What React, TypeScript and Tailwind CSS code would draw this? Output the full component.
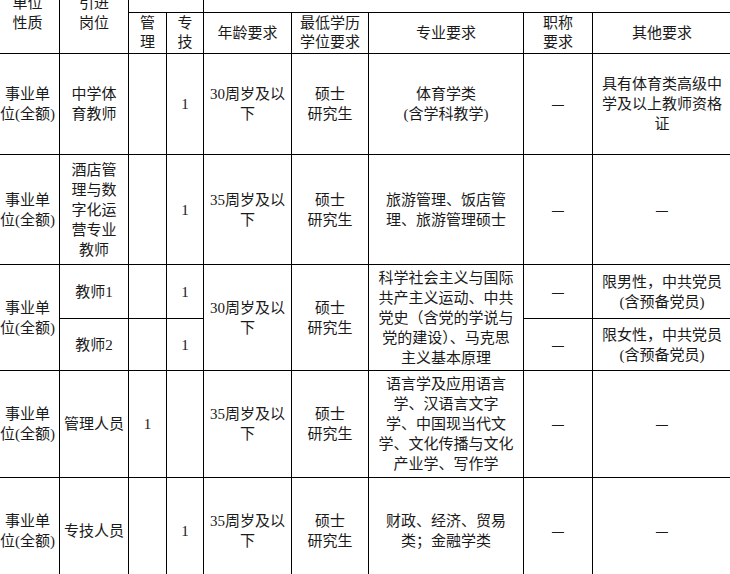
import React from 'react';

const cell = 'bg-white flex items-center justify-center text-center';

const Dash: React.FC = () => (
  <span className="font-['Noto_Sans_CJK_SC',sans-serif]">—</span>
);

const App: React.FC = () => {
  return (
    <div className="w-[730px] h-[574px] overflow-hidden bg-white">
      <div className="-mt-[29px] -ml-[5px] w-[737px] font-['Liberation_Serif','Noto_Sans_CJK_SC',serif] text-[15px] leading-[20px] text-[#1a1a1a]">
        <div className="grid grid-cols-[63px_68px_37px_36px_87px_76px_154px_68px_138px] grid-rows-[40px_40px_100px_109px_53px_51px_106px_106px] gap-px bg-black p-px">
          {/* header */}
          <div className={`${cell} col-start-1 row-start-1 row-span-2`}>单位<br />性质</div>
          <div className={`${cell} col-start-2 row-start-1 row-span-2`}>引进<br />岗位</div>
          <div className={`${cell} col-start-3 row-start-1 col-span-2`}></div>
          <div className={`${cell} col-start-5 row-start-1 col-span-5`}></div>
          <div className={`${cell} col-start-3 row-start-2 leading-[19px]`}>管<br />理</div>
          <div className={`${cell} col-start-4 row-start-2 leading-[19px]`}>专<br />技</div>
          <div className={`${cell} col-start-5 row-start-2`}>年龄要求</div>
          <div className={`${cell} col-start-6 row-start-2 leading-[19px]`}>最低学历<br />学位要求</div>
          <div className={`${cell} col-start-7 row-start-2`}>专业要求</div>
          <div className={`${cell} col-start-8 row-start-2 leading-[19px]`}>职称<br />要求</div>
          <div className={`${cell} col-start-9 row-start-2`}>其他要求</div>

          {/* 中学体育教师 */}
          <div className={`${cell} col-start-1 row-start-3`}>事业单<br />位(全额)</div>
          <div className={`${cell} col-start-2 row-start-3`}>中学体<br />育教师</div>
          <div className={`${cell} col-start-3 row-start-3`}></div>
          <div className={`${cell} col-start-4 row-start-3`}>1</div>
          <div className={`${cell} col-start-5 row-start-3`}>30周岁及以<br />下</div>
          <div className={`${cell} col-start-6 row-start-3`}>硕士<br />研究生</div>
          <div className={`${cell} col-start-7 row-start-3`}>体育学类<br />(含学科教学)</div>
          <div className={`${cell} col-start-8 row-start-3`}><Dash /></div>
          <div className={`${cell} col-start-9 row-start-3`}>具有体育类高级中<br />学及以上教师资格<br />证</div>

          {/* 酒店管理 */}
          <div className={`${cell} col-start-1 row-start-4`}>事业单<br />位(全额)</div>
          <div className={`${cell} col-start-2 row-start-4`}>酒店管<br />理与数<br />字化运<br />营专业<br />教师</div>
          <div className={`${cell} col-start-3 row-start-4`}></div>
          <div className={`${cell} col-start-4 row-start-4`}>1</div>
          <div className={`${cell} col-start-5 row-start-4`}>35周岁及以<br />下</div>
          <div className={`${cell} col-start-6 row-start-4`}>硕士<br />研究生</div>
          <div className={`${cell} col-start-7 row-start-4`}>旅游管理、饭店管<br />理、旅游管理硕士</div>
          <div className={`${cell} col-start-8 row-start-4`}><Dash /></div>
          <div className={`${cell} col-start-9 row-start-4`}><Dash /></div>

          {/* 教师1 / 教师2 */}
          <div className={`${cell} col-start-1 row-start-5 row-span-2`}>事业单<br />位(全额)</div>
          <div className={`${cell} col-start-2 row-start-5`}>教师1</div>
          <div className={`${cell} col-start-3 row-start-5`}></div>
          <div className={`${cell} col-start-4 row-start-5`}>1</div>
          <div className={`${cell} col-start-5 row-start-5 row-span-2`}>30周岁及以<br />下</div>
          <div className={`${cell} col-start-6 row-start-5 row-span-2`}>硕士<br />研究生</div>
          <div className={`${cell} col-start-7 row-start-5 row-span-2`}>
            科学社会主义与国际<br />共产主义运动、中共<br />党史（含党的学说与<br />党的建设）、马克思<br />主义基本原理
          </div>
          <div className={`${cell} col-start-8 row-start-5`}><Dash /></div>
          <div className={`${cell} col-start-9 row-start-5`}>限男性，中共党员<br />(含预备党员)</div>
          <div className={`${cell} col-start-2 row-start-6`}>教师2</div>
          <div className={`${cell} col-start-3 row-start-6`}></div>
          <div className={`${cell} col-start-4 row-start-6`}>1</div>
          <div className={`${cell} col-start-8 row-start-6`}><Dash /></div>
          <div className={`${cell} col-start-9 row-start-6`}>限女性，中共党员<br />(含预备党员)</div>

          {/* 管理人员 */}
          <div className={`${cell} col-start-1 row-start-7`}>事业单<br />位(全额)</div>
          <div className={`${cell} col-start-2 row-start-7`}>管理人员</div>
          <div className={`${cell} col-start-3 row-start-7`}>1</div>
          <div className={`${cell} col-start-4 row-start-7`}></div>
          <div className={`${cell} col-start-5 row-start-7`}>35周岁及以<br />下</div>
          <div className={`${cell} col-start-6 row-start-7`}>硕士<br />研究生</div>
          <div className={`${cell} col-start-7 row-start-7`}>
            语言学及应用语言<br />学、汉语言文字<br />学、中国现当代文<br />学、文化传播与文化<br />产业学、写作学
          </div>
          <div className={`${cell} col-start-8 row-start-7`}><Dash /></div>
          <div className={`${cell} col-start-9 row-start-7`}><Dash /></div>

          {/* 专技人员 */}
          <div className={`${cell} col-start-1 row-start-8`}>事业单<br />位(全额)</div>
          <div className={`${cell} col-start-2 row-start-8`}>专技人员</div>
          <div className={`${cell} col-start-3 row-start-8`}></div>
          <div className={`${cell} col-start-4 row-start-8`}>1</div>
          <div className={`${cell} col-start-5 row-start-8`}>35周岁及以<br />下</div>
          <div className={`${cell} col-start-6 row-start-8`}>硕士<br />研究生</div>
          <div className={`${cell} col-start-7 row-start-8`}>财政、经济、贸易<br />类；金融学类</div>
          <div className={`${cell} col-start-8 row-start-8`}><Dash /></div>
          <div className={`${cell} col-start-9 row-start-8`}><Dash /></div>
        </div>
      </div>
    </div>
  );
};

export default App;
